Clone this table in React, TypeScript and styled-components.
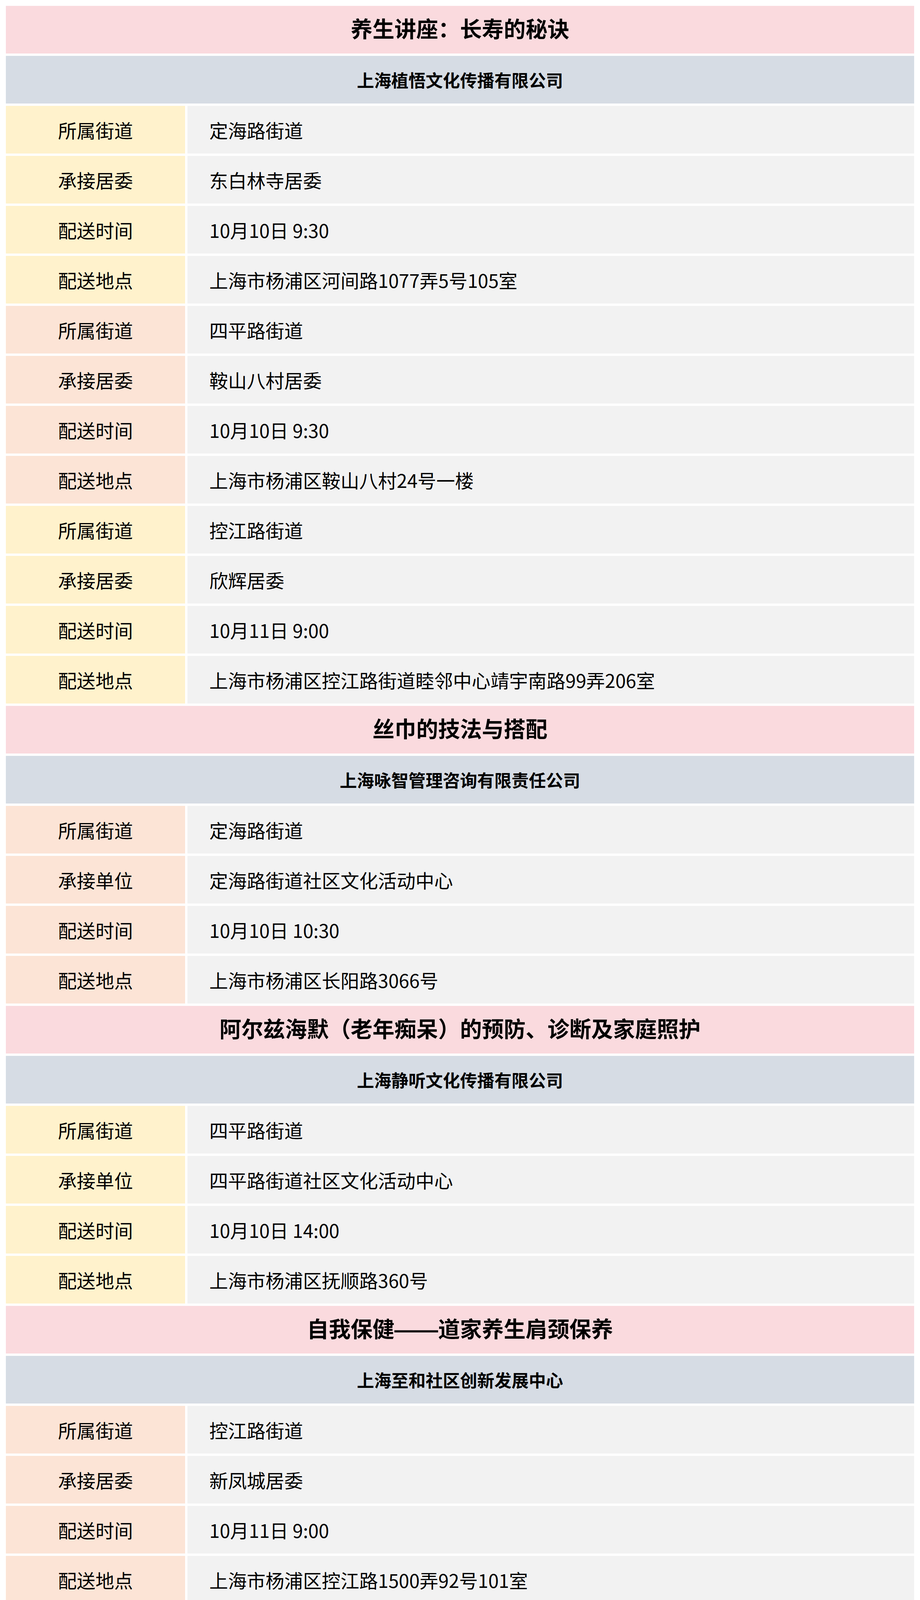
import React from 'react';
import styled, { createGlobalStyle } from 'styled-components';

type Tone = 'yellow' | 'peach';

type Stop = {
    street: string;
    hostLabel: string;
    host: string;
    time: string;
    place: string;
    tone: Tone;
};

type Lecture = {
    title: string;
    company: string;
    stops: Stop[];
};

const lectures: Lecture[] = [
    {
        title: '养生讲座：长寿的秘诀',
        company: '上海植悟文化传播有限公司',
        stops: [
            {
                street: '定海路街道',
                hostLabel: '承接居委',
                host: '东白林寺居委',
                time: '10月10日 9:30',
                place: '上海市杨浦区河间路1077弄5号105室',
                tone: 'yellow',
            },
            {
                street: '四平路街道',
                hostLabel: '承接居委',
                host: '鞍山八村居委',
                time: '10月10日 9:30',
                place: '上海市杨浦区鞍山八村24号一楼',
                tone: 'peach',
            },
            {
                street: '控江路街道',
                hostLabel: '承接居委',
                host: '欣辉居委',
                time: '10月11日 9:00',
                place: '上海市杨浦区控江路街道睦邻中心靖宇南路99弄206室',
                tone: 'yellow',
            },
        ],
    },
    {
        title: '丝巾的技法与搭配',
        company: '上海咏智管理咨询有限责任公司',
        stops: [
            {
                street: '定海路街道',
                hostLabel: '承接单位',
                host: '定海路街道社区文化活动中心',
                time: '10月10日 10:30',
                place: '上海市杨浦区长阳路3066号',
                tone: 'peach',
            },
        ],
    },
    {
        title: '阿尔兹海默（老年痴呆）的预防、诊断及家庭照护',
        company: '上海静听文化传播有限公司',
        stops: [
            {
                street: '四平路街道',
                hostLabel: '承接单位',
                host: '四平路街道社区文化活动中心',
                time: '10月10日 14:00',
                place: '上海市杨浦区抚顺路360号',
                tone: 'yellow',
            },
        ],
    },
    {
        title: '自我保健——道家养生肩颈保养',
        company: '上海至和社区创新发展中心',
        stops: [
            {
                street: '控江路街道',
                hostLabel: '承接居委',
                host: '新凤城居委',
                time: '10月11日 9:00',
                place: '上海市杨浦区控江路1500弄92号101室',
                tone: 'peach',
            },
        ],
    },
    {
        title: '“竹韵声声唱快板” 文化讲座',
        company: '上海田耘文化传播有限公司',
        stops: [
            {
                street: '新江湾城街道',
                hostLabel: '承接居委',
                host: '国安路第一居委',
                time: '10月11日 9:00',
                place: '上海市杨浦区国安路791号',
                tone: 'yellow',
            },
        ],
    },
    {
        title: '文化讲殷行座进万家：传承中华茶文化与茶健康',
        company: '上海德播文化传播有限公司',
        stops: [
            {
                street: '殷行街道',
                hostLabel: '承接居委',
                host: '市光二村第三居委',
                time: '10月11日 9:00',
                place: '上海市杨浦区市光二村108号201室',
                tone: 'peach',
            },
        ],
    },
];

const toneColor: Record<Tone, string> = {
    yellow: '#fff2cc',
    peach: '#fce4d6',
};

const GlobalStyle = createGlobalStyle`
    html, body {
        margin: 0;
        padding: 0;
        background: #ffffff;
    }
    body {
        font-family: "Noto Sans CJK SC", "Noto Sans", sans-serif;
        color: #000000;
    }
`;

const Sheet = styled.main`
    display: flex;
    flex-direction: column;
    gap: 6px;
    padding: 15px;
`;

const TitleBar = styled.h2`
    margin: 0;
    height: 122px;
    display: flex;
    align-items: center;
    justify-content: center;
    background: #fadade;
    font-family: "Liberation Sans", "Noto Sans CJK SC", sans-serif;
    font-size: 56px;
    font-weight: 700;
    line-height: 1;
    white-space: pre;
`;

const CompanyBar = styled.h3`
    margin: 0;
    height: 122px;
    display: flex;
    align-items: center;
    justify-content: center;
    background: #d6dce4;
    font-size: 44px;
    font-weight: 700;
    line-height: 1;
`;

const Row = styled.div`
    display: grid;
    grid-template-columns: 459px 1fr;
    gap: 6px;
    height: 122px;
`;

const Label = styled.div<{ $tone: Tone }>`
    display: flex;
    align-items: center;
    justify-content: center;
    background: ${({ $tone }) => toneColor[$tone]};
    font-size: 48px;
    line-height: 1;
`;

const Value = styled.div`
    display: flex;
    align-items: center;
    padding-left: 56px;
    background: #f2f2f2;
    font-size: 48px;
    line-height: 1;
    white-space: nowrap;
`;

const Field: React.FC<{ label: string; value: string; tone: Tone }> = ({ label, value, tone }) => (
    <Row>
        <Label $tone={tone}>{label}</Label>
        <Value>{value}</Value>
    </Row>
);

const App: React.FC = () => (
    <>
        <GlobalStyle />
        <Sheet>
            {lectures.map((lecture) => (
                <React.Fragment key={lecture.title}>
                    <TitleBar>{lecture.title}</TitleBar>
                    <CompanyBar>{lecture.company}</CompanyBar>
                    {lecture.stops.map((stop) => (
                        <React.Fragment key={stop.street + stop.place}>
                            <Field label="所属街道" value={stop.street} tone={stop.tone} />
                            <Field label={stop.hostLabel} value={stop.host} tone={stop.tone} />
                            <Field label="配送时间" value={stop.time} tone={stop.tone} />
                            <Field label="配送地点" value={stop.place} tone={stop.tone} />
                        </React.Fragment>
                    ))}
                </React.Fragment>
            ))}
        </Sheet>
    </>
);

export default App;
